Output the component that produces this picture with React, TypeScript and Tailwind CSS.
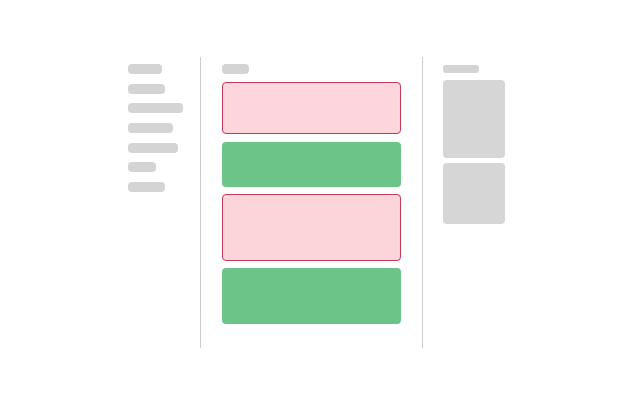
import React from "react";

export default function App() {
  const navWidths = [34, 37, 55, 45, 50, 28, 37];
  return (
    <div className="w-[640px] h-[400px] bg-white overflow-hidden" style={{ fontFamily: "'Liberation Sans', sans-serif" }}>
      <div className="flex pt-[57px] pl-[128px]">
        {/* left sidebar */}
        <div className="w-[72px] pt-[7px] flex flex-col gap-[9.67px]">
          {navWidths.map((w, i) => (
            <div key={i} className="h-[10px] rounded-[4px] bg-[#d4d4d4]" style={{ width: w }} />
          ))}
        </div>
        <div className="w-px h-[291px] bg-[#cccccc]" />
        {/* middle */}
        <div className="w-[221px] pl-[21px] pr-[21px] pt-[7px] flex flex-col">
          <div className="h-[10px] w-[27px] rounded-[4px] bg-[#d4d4d4]" />
          <div className="mt-[8px] h-[52px] rounded-[4px] bg-[#fdd5dc] border border-[#c53a55]" />
          <div className="mt-[8px] h-[45px] rounded-[4px] bg-[#6dc489]" />
          <div className="mt-[7px] h-[67px] rounded-[4px] bg-[#fbd5da] border border-[#c53a55]" />
          <div className="mt-[7px] h-[56px] rounded-[4px] bg-[#6dc489]" />
        </div>
        <div className="w-px h-[291px] bg-[#cccccc]" />
        {/* right */}
        <div className="pl-[20px] pt-[8px] flex flex-col">
          <div className="h-[8px] w-[36px] rounded-[3px] bg-[#d4d4d4]" />
          <div className="mt-[7px] h-[78px] w-[62px] rounded-[4px] bg-[#d6d6d6]" />
          <div className="mt-[5px] h-[61px] w-[62px] rounded-[4px] bg-[#d6d6d6]" />
        </div>
      </div>
    </div>
  );
}
